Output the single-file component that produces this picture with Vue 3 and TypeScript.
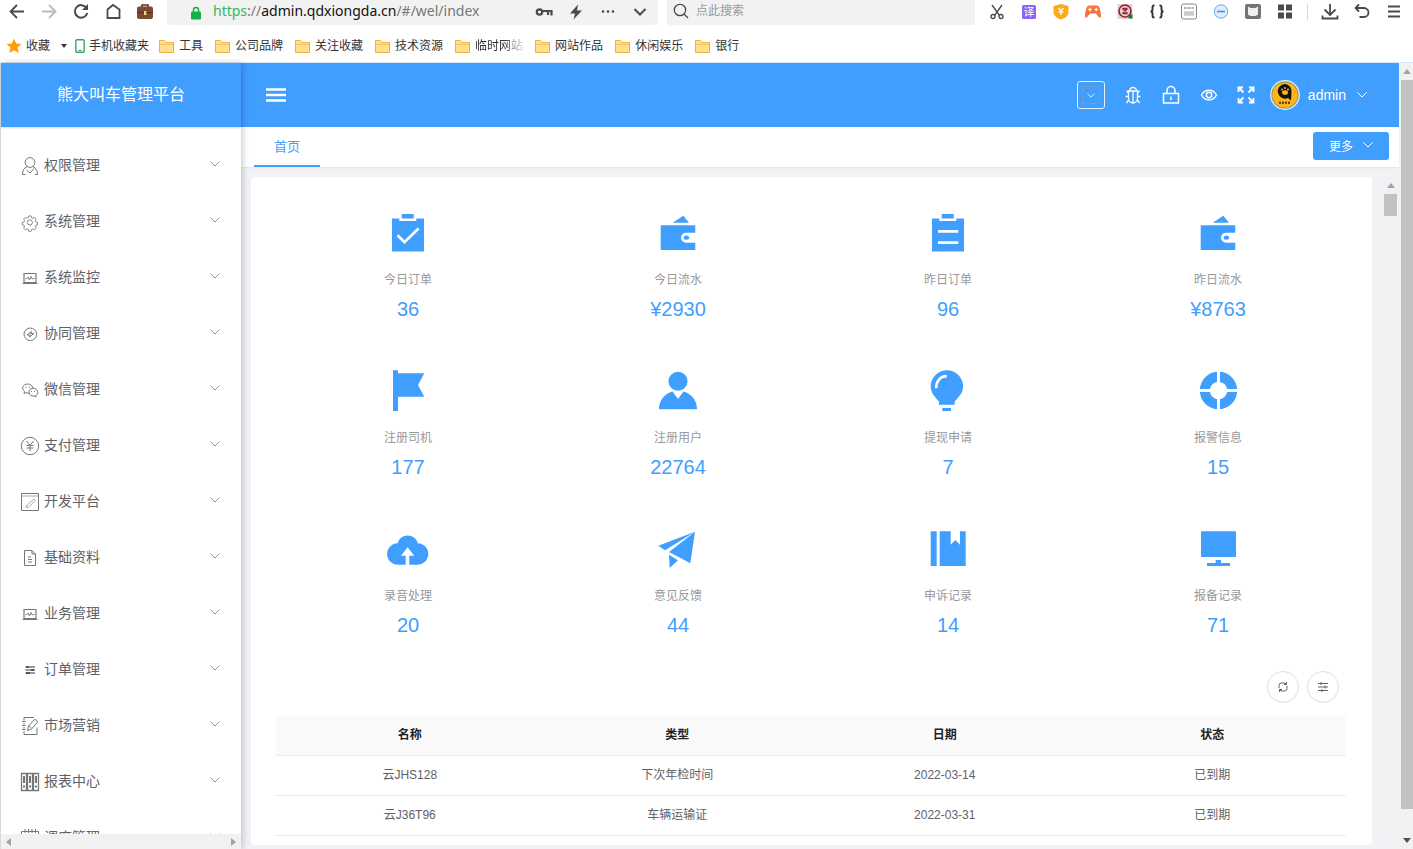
<script setup lang="ts">
interface Glyph { name: string; art: string; label: string }
interface Stat { label: string; value: string; icon: string }

const line = (d: string, color = '#4a4a4a', width = 2): string =>
  `<path d="${d}" fill="none" stroke="${color}" stroke-width="${width}"/>`

const navButtons: Glyph[] = [
  { name: 'back', label: '后退', art: line('M19 11.500H5.500M12 5l-6.500 6.500L12 18', '#4a4a4a', 1.8) },
  { name: 'forward', label: '前进', art: line('M5 11.500h13.500M12 5l6.500 6.500L12 18', '#bbb', 1.8) },
  { name: 'reload', label: '刷新', art: line('M17.500 8A6.300 6.300 0 1 0 18.300 13') + '<path d="M19 4v6h-6z" fill="#4a4a4a"/>' },
  { name: 'home', label: '主页', art: line('M6.500 18V9.500L12 5l6.500 4.500V18z', '#4a4a4a', 1.8) },
  { name: 'case', label: '工具箱', art: '<path d="M9 7V5h6v2" fill="none" stroke="#5b2e1c" stroke-width="1.600"/><rect x="4" y="6.500" width="16" height="12.500" rx="2" fill="#7d4a30"/><path d="M4 12.500h16" stroke="#5b2e1c"/><rect x="11" y="11" width="2.400" height="4" fill="#f0d090"/>' },
]

const addressTools: Glyph[] = [
  { name: 'key', label: '密码', art: '<circle cx="7.500" cy="12" r="2.700" fill="none" stroke="#4a4a4a" stroke-width="2.200"/>' + line('M10.500 11h9v4.500M16 11v4', '#4a4a4a', 2.2) },
  { name: 'bolt', label: '极速', art: '<path d="M14 4.500L6 13.500h5L9.500 19.500 18 10.500h-5z" fill="#4a4a4a"/>' },
  { name: 'dots', label: '更多操作', art: '<circle cx="7" cy="11.500" r="1.300" fill="#4a4a4a"/><circle cx="12" cy="11.500" r="1.300" fill="#4a4a4a"/><circle cx="17" cy="11.500" r="1.300" fill="#4a4a4a"/>' },
  { name: 'down', label: '展开', art: line('M6.500 9l5.500 5.500L17.500 9') },
]

const extensions: Glyph[] = [
  { name: 'cut', label: '截图', art: line('M7 5l7.500 10.500M17 5L9.500 15.500', '#4a4a4a', 1.3) + '<circle cx="8" cy="16.500" r="2" fill="none" stroke="#4a4a4a" stroke-width="1.300"/><circle cx="16" cy="16.500" r="2" fill="none" stroke="#4a4a4a" stroke-width="1.300"/>' },
  { name: 'translate', label: '翻译', art: '<rect x="5" y="5" width="14" height="14" rx="1.500" fill="#8a63f7"/><text x="12" y="16" text-anchor="middle" font-size="11" fill="#fff">译</text>' },
  { name: 'shield', label: '优惠', art: '<path d="M12 4l7.500 2v6c0 3.500-3 6-7.500 7.500C7.500 18 4.500 15.500 4.500 12V6z" fill="#ffa916"/>' + line('M9.500 8l2.500 3 2.500-3M9.500 12h5M12 11v4', '#fff', 1.4) },
  { name: 'game', label: '游戏', art: '<path d="M8 5.500h8c2.500 0 4 6.500 4 10.500 0 2.500-2 2-3 0l-2-2.500H9L7 16c-1 2-3 2.500-3 0 0-4 1.500-10.500 4-10.500z" fill="#f4743b"/>' + line('M7 9.500h4M9 7.500v4M13.500 9.500h3.500M15.200 7.700v3.600', '#fff', 1.2) },
  { name: 'seal', label: '印章', art: '<rect x="4.500" y="4" width="15" height="15" fill="#ded6d2"/><circle cx="12" cy="11" r="6" fill="none" stroke="#a01c30" stroke-width="1.600"/><path d="M9.500 8.500l5 5M14.500 8.500l-5 5M9.500 8.500h5M9.500 13.500h5" stroke="#a01c30" stroke-width="1.400" fill="none"/><rect x="15.500" y="14.500" width="4" height="4" fill="#1f7a34"/>' },
  { name: 'braces', label: '格式化', art: line('M9.500 5.500H9Q7.500 5.500 7.500 7.500v2Q7.500 11.500 5.500 11.500 7.500 11.500 7.500 13.500v2Q7.500 17.500 9 17.500h.500M14.500 5.500h.500q1.500 0 1.500 2v2q0 2 2 2-2 0-2 2v2q0 2-1.500 2h-.500', '#333', 1.9) },
  { name: 'json', label: '数据查看', art: '<rect x="4.500" y="4" width="15" height="15" rx="2" fill="#fff" stroke="#888"/><path d="M7 8h10" stroke="#999" stroke-width="1.600" stroke-dasharray="2 .600"/><path d="M7 13.500h10" stroke="#ccc" stroke-width="4.500"/>' },
  { name: 'minus', label: '屏蔽', art: '<circle cx="12" cy="11.500" r="6.700" fill="#dcedff" stroke="#6ba6ea"/><path d="M8 11.500h8" stroke="#4a8fe0" stroke-width="1.600"/>' },
  { name: 'reader', label: '阅读', art: '<rect x="4" y="4" width="16" height="15" rx="2" fill="#747474"/><path d="M7 6.500l2.500 1.500h5L17 6.500v8L14.500 16h-5L7 14.500z" fill="#efefef"/>' },
  { name: 'apps', label: '应用', art: '<path d="M5 4.500h6v6H5zM13 4.500h6v6h-6zM5 12.500h6v6H5zM13 12.500h6v6h-6z" fill="#4a4a4a"/>' },
]

const windowTools: Glyph[] = [
  { name: 'download', label: '下载', art: line('M12 4v10.500M6.500 9.500l5.500 5.500 5.500-5.500M4.500 15.500v3h15v-3', '#4a4a4a', 1.8) },
  { name: 'undo', label: '恢复', art: line('M9 4.500L5.500 8 9 11.500M6 8h8a4.500 4.500 0 0 1 0 9H9.500', '#4a4a4a', 1.8) },
  { name: 'menu', label: '菜单', art: line('M6 6.500h12M6 11.500h12M6 16.500h12', '#4a4a4a', 1.8) },
]

const bookmarks: { label: string; faded?: boolean }[] = [
  { label: '工具' }, { label: '公司品牌' }, { label: '关注收藏' }, { label: '技术资源' },
  { label: '临时网站', faded: true }, { label: '网站作品' }, { label: '休闲娱乐' }, { label: '银行' },
]

const laptop = '<path d="M4 5.500h12v9H4zM2.500 15.500h15" stroke-width="1.200"/><path d="M5.500 10.500H7l1.200-1.500 1.300 3 1.500-3.500 1.200 2.500 .800-.500h1.500" stroke-width=".900"/>'
const menu: { label: string; art: string }[] = [
  { label: '权限管理', art: '<circle cx="10" cy="6.500" r="4.900"/><path d="M7 10.700c-3 1-4.500 4-4.500 7.800h3M13 10.700c3 1 4.500 4 4.500 7.800h-2.500M6.500 14l3.500 3 4-4.500"/>' },
  { label: '系统管理', art: '<g transform="translate(1.300 1.800) scale(.86)"><circle cx="10" cy="10" r="3"/><path d="M8.600 2.500h2.800l.500 2 1.600.700 1.800-1.100 2 2-1.100 1.800.700 1.600 2 .500v2.800l-2 .500-.700 1.600 1.100 1.800-2 2-1.800-1.100-1.600.700-.500 2H8.600l-.500-2-1.600-.700-1.800 1.100-2-2 1.100-1.800-.700-1.600-2-.500V10l2-.500.700-1.600-1.100-1.800 2-2 1.800 1.100 1.600-.700z"/></g>' },
  { label: '系统监控', art: laptop },
  { label: '协同管理', art: '<circle cx="10.300" cy="10.300" r="6.300"/><path d="M7 11l4.500-3.500-.700 2h3l-4.300 3.500.700-2z"/>' },
  { label: '微信管理', art: '<path d="M9.500 13c-1.300.300-2.500.100-3.500-.400L4 13.500l.500-2C1 8.500 3 4 7.500 4c3 0 5 1.700 5.300 4"/><path d="M13 8.200c5.500.200 6 6 2.800 7.300l.200 1.500-2-1c-7 .500-6.500-7.500-1-7.800zM5.500 7.300h1M9 7.300h1M11 11.300h1M14 11.300h1"/>' },
  { label: '支付管理', art: '<circle cx="10" cy="10" r="8.700"/><path d="M6.500 5l3.500 4.500L13.500 5M6.500 9.500h7M6.500 12h7M10 9.500V15"/>' },
  { label: '开发平台', art: '<path d="M1.500 1.500h17v17h-17z"/><path d="M1.500 4h17M6 15.500l1-2.500 7-6 1.500 1.500L8.500 15z" stroke="#aaa"/>' },
  { label: '基础资料', art: '<path d="M4.500 2.500h7.500l3.500 3.500v11.500h-11zM12 2.500V6h3.500M8 9h3M8 11.500h4M8 14h4"/>' },
  { label: '业务管理', art: laptop },
  { label: '订单管理', art: '<path d="M5.500 7h9.500M5.500 10h9.500M5.500 13h9.500" stroke="#999" stroke-width="2"/><path d="M6 7h3M11 10h3M6 13h4" stroke="#555" stroke-width="2"/>' },
  { label: '市场营销', art: '<path d="M14 1.500H4v3M4 7v1.500M4 11v1.500M4 15v3.500h13v-7M2 5.500h3.500M2 9.500h3.500M2 13.500h3.500"/><path d="M7.500 14.500l1-4.500 6-6.500q3 0 3 2.700l-6 6.800zM9 9.800l2.500 2.200"/>' },
  { label: '报表中心', art: '<path d="M1.500 1.500h5v17h-5zM7.500 1.500h5v17h-5zM13.500 1.500h5v17h-5z" stroke-width="1.300"/><path d="M4 4v7M10 4v7M16 4v7" stroke-width="2"/><path d="M3 14.500h2M9 14.500h2M15 14.500h2" stroke-width="2"/>' },
  { label: '调度管理', art: '<path d="M1.500 3.500h17v14h-17zM5 1v4M8.500 1v4M12 1v4M15.500 1v4M1.500 8h17"/>' },
]

const board = '<path d="M17.700 6h12v4.500h-12zM8 10.500h7.300V13h17v-2.500H40v33H8z"/>'
const art: Record<string, string> = {
  checked: board + '<path d="M13.500 27.200l7 7L34.500 20.500" fill="none" stroke="#fff" stroke-width="2.700"/>',
  order: board + '<path d="M14 23.300h20.300M14 34.700h20.300" stroke="#fff" stroke-width="2.700"/>',
  wallet: '<path d="M18.700 14.700L29.300 7.700 35 14.700zM6.700 17.300h34.600v7.400H32a5 5 0 0 0 0 10h9.300V42H6.700z"/><ellipse cx="32.500" cy="29.700" rx="2.700" ry="2.100"/>',
  flag: '<path d="M9 4.300h5v3h26.300L34 19l6.300 11.700H14V45H9z"/>',
  user: '<circle cx="24" cy="15.300" r="9.500"/><path d="M18.500 25.500L24 33l5.500-7.500C37.500 27.500 43 34.500 43 43.300H5C5 34.500 10.500 27.500 18.500 25.500z"/>',
  bulb: '<path d="M15 38.700v-3.200C12 32 6.700 27.500 6.700 20.500a16.200 16.200 0 0 1 32.400 0c0 7-5.400 11.500-8.400 15v3.200zM18.300 42H27v3h-8.700z"/><path d="M12.200 22.300C12.200 15 16 10.500 22.700 10.200" fill="none" stroke="#fff" stroke-width="2.700"/>',
  help: '<circle cx="24.500" cy="24.500" r="13.700" fill="none" stroke="#409eff" stroke-width="10"/><path d="M24.500 4v41M4 24.500h41" stroke="#fff" stroke-width="3"/>',
  cloud: '<path d="M21.700 40.700H14a10.700 10.700 0 0 1-.400-21.400 10.400 10.400 0 0 1 20.200 0A10.700 10.700 0 0 1 33.300 40.700h-8v-9h5L23.600 23.300 17 31.700h4.700z"/>',
  plane: '<path d="M4.300 21.700L41 7.700 11 26.300zM15 28L41 7.700 36.300 39.300zM15 30.700l9 5.600L15.700 44z"/>',
  book: '<path d="M6.700 7.300h6V42h-6zM15.700 7.300h11v13.400l4.600-4.700 4.700 4.700V7.300h5.700V42h-26z"/>',
  screen: '<path d="M7 7.300h35V33H7zM21.700 36H27v3h9v3H13v-3h8.700z"/>',
}

const stats: Stat[] = [
  { label: '今日订单', value: '36', icon: 'checked' },
  { label: '今日流水', value: '¥2930', icon: 'wallet' },
  { label: '昨日订单', value: '96', icon: 'order' },
  { label: '昨日流水', value: '¥8763', icon: 'wallet' },
  { label: '注册司机', value: '177', icon: 'flag' },
  { label: '注册用户', value: '22764', icon: 'user' },
  { label: '提现申请', value: '7', icon: 'bulb' },
  { label: '报警信息', value: '15', icon: 'help' },
  { label: '录音处理', value: '20', icon: 'cloud' },
  { label: '意见反馈', value: '44', icon: 'plane' },
  { label: '申诉记录', value: '14', icon: 'book' },
  { label: '报备记录', value: '71', icon: 'screen' },
]

const headerTools: Glyph[] = [
  { name: 'bug', label: '日志', art: '<path d="M6.500 6a3.500 3.500 0 0 1 7 0M5.500 6h9v7a4.500 5 0 0 1-9 0zM10 6v12M5.500 8.500L3.500 5.500M14.500 8.500l2-3M5.500 11.500h-3M14.500 11.500h3M6 14.500l-2.500 3.500M14 14.500l2.500 3.500"/>' },
  { name: 'lock', label: '锁屏', art: '<path d="M2.500 8.500h15v9.500h-15zM6 8.500V5.500a4 4 0 0 1 8 0v3M10 11.500v3.500" stroke-width="1.500"/>' },
  { name: 'eye', label: '主题', art: '<path d="M2.500 10c3.500-6.500 11.500-6.500 15 0-3.500 6.500-11.500 6.500-15 0z" stroke-width="1.500"/><circle cx="10" cy="10" r="2.700" stroke-width="1.500"/>' },
  { name: 'full', label: '全屏', art: '<path d="M7.500 7.500L3 3M2.500 7V2.500H7M12.500 7.500L17 3M13 2.500h4.500V7M7.500 12.500L3 17M2.500 13v4.500H7M12.500 12.500L17 17M13 17.500h4.500V13" stroke-width="1.800"/>' },
]

const columns = ['名称', '类型', '日期', '状态']
const rows = [
  ['云JHS128', '下次年检时间', '2022-03-14', '已到期'],
  ['云J36T96', '车辆运输证', '2022-03-31', '已到期'],
]
</script>

<template>
  <div class="window">
    <div class="browser">
      <div class="nav-row">
        <div class="icon-group">
          <button v-for="b in navButtons" :key="b.name" class="tool" :aria-label="b.label">
            <svg viewBox="0 0 24 24" v-html="b.art" />
          </button>
        </div>
        <div class="address">
          <svg class="secure" viewBox="0 0 12 14"><path d="M3.500 6V4a2.500 2.500 0 0 1 5 0v2" fill="none" stroke="#12b24b" stroke-width="1.500" /><rect x="1" y="5.500" width="10" height="8" rx="1" fill="#12b24b" /></svg>
          <div class="url"><span class="scheme">https</span>://<span class="host">admin.qdxiongda.cn</span>/#/wel/index</div>
          <div class="icon-group">
            <button v-for="b in addressTools" :key="b.name" class="tool" :aria-label="b.label">
              <svg viewBox="0 0 24 24" v-html="b.art" />
            </button>
          </div>
        </div>
        <label class="search">
          <svg viewBox="0 0 16 16"><circle cx="7" cy="7" r="5.700" fill="none" stroke="#4a4a4a" stroke-width="1.300" /><path d="M11 11l4 4" stroke="#4a4a4a" stroke-width="1.300" /></svg>
          <input type="text" placeholder="点此搜索" aria-label="搜索">
        </label>
        <div class="icon-group">
          <button v-for="b in extensions" :key="b.name" class="tool" :aria-label="b.label">
            <svg viewBox="0 0 24 24" v-html="b.art" />
          </button>
        </div>
        <span class="divider" />
        <div class="icon-group">
          <button v-for="b in windowTools" :key="b.name" class="tool" :aria-label="b.label">
            <svg viewBox="0 0 24 24" v-html="b.art" />
          </button>
        </div>
      </div>
      <nav class="bookmarks">
        <a href="#" class="favorite">
          <svg class="star" viewBox="0 0 16 16"><path d="M8 .500l2.200 5 5.300.500-4 3.600 1.200 5.400L8 12.200 3.300 15l1.200-5.400-4-3.600 5.300-.500z" fill="#ff9c0a" /></svg>
          <span>收藏</span>
          <svg class="caret" viewBox="0 0 6 4"><path d="M0 0h6L3 4z" fill="#333" /></svg>
        </a>
        <a href="#" class="phone">
          <svg viewBox="0 0 10 14"><rect x=".800" y=".800" width="8.400" height="12.400" rx="1" fill="#fff" stroke="#3aa564" stroke-width="1.400" /><path d="M3.500 11.500h3" stroke="#3aa564" /></svg>
          <span>手机收藏夹</span>
        </a>
        <a v-for="b in bookmarks" :key="b.label" href="#" class="folder" :class="{ faded: b.faded }">
          <svg viewBox="0 0 15 13"><path d="M.500 12.500V.500h5l1.500 2h7.500v10z" fill="#ffe093" stroke="#eeb040" /><path d="M1 4.500h13" stroke="#f3c463" /></svg>
          <span>{{ b.label }}</span>
        </a>
      </nav>
    </div>

    <div class="page">
      <aside class="sidebar">
        <div class="brand">熊大叫车管理平台</div>
        <nav class="menu">
          <a v-for="m in menu" :key="m.label" href="#" class="menu-item">
            <svg class="menu-icon" viewBox="0 0 20 20" v-html="m.art" />
            <span>{{ m.label }}</span>
            <svg class="chevron" viewBox="0 0 10 6"><path d="M.500.500L5 5 9.500.500" /></svg>
          </a>
        </nav>
        <div class="hscroll">
          <svg viewBox="0 0 5 8"><path d="M5 0v8L0 4z" /></svg>
          <svg viewBox="0 0 5 8"><path d="M0 0v8l5-4z" /></svg>
        </div>
      </aside>

      <div class="main">
        <header class="topbar">
          <button class="burger" aria-label="折叠菜单">
            <svg viewBox="0 0 20 14"><path d="M0 1.500h20M0 7h20M0 12.500h20" stroke="#fff" stroke-width="2.400" /></svg>
          </button>
          <div class="top-tools">
            <button class="picker" aria-label="切换">
              <span><svg class="chevron" viewBox="0 0 10 6"><path d="M.500.500L5 5 9.500.500" /></svg></span>
            </button>
            <button v-for="t in headerTools" :key="t.name" class="top-tool" :class="t.name" :aria-label="t.label">
              <svg viewBox="0 0 20 20" v-html="t.art" />
            </button>
            <button class="account">
              <svg class="avatar" viewBox="0 0 30 30"><circle cx="15" cy="15" r="14.300" fill="#8f9a78" stroke="#e8f1fb" stroke-width="1.200" /><circle cx="15" cy="15" r="12.600" fill="#fdb515" /><path d="M15 4a7.300 7.300 0 1 0 3 14l3 2.500.500-9A7 7 0 0 0 15 4z" fill="#16130c" /><ellipse cx="15" cy="12.500" rx="3" ry="2.300" fill="#fdb515" /><circle cx="12" cy="9.500" r="1" fill="#fdb515" /><circle cx="15" cy="8" r="1" fill="#fdb515" /><circle cx="18" cy="9.500" r="1" fill="#fdb515" /><path d="M9 22.800h12" stroke="#4b3510" stroke-width="2" stroke-dasharray="2 1" /></svg>
              <span>admin</span>
              <svg class="chevron" viewBox="0 0 10 6"><path d="M.500.500L5 5 9.500.500" /></svg>
            </button>
          </div>
        </header>
        <div class="tabs">
          <a href="#" class="tab">首页</a>
          <button class="more"><span>更多</span><svg class="chevron" viewBox="0 0 10 6"><path d="M.500.500L5 5 9.500.500" /></svg></button>
        </div>
        <div class="content">
          <main class="card">
            <section class="stats">
              <a v-for="s in stats" :key="s.label" href="#" class="stat">
                <svg viewBox="0 0 48 48" v-html="art[s.icon]" />
                <span class="stat-label">{{ s.label }}</span>
                <span class="stat-value">{{ s.value }}</span>
              </a>
            </section>
            <div class="table-tools">
              <button class="round" aria-label="刷新表格">
                <svg viewBox="0 0 12 12"><path d="M2 7V4.500Q2 2 4.500 2H8M10 5v2.500Q10 10 7.500 10H4M9.500 1v2.500H7M2.500 11V8.500H5M8 2l1.500 1.500M4 10L2.500 8.500" /></svg>
              </button>
              <button class="round" aria-label="列设置">
                <svg viewBox="0 0 12 12"><path d="M1 2.500h10M1 6h10M1 9.500h10M4 1v3M8 4.500v3M5 8v3" /></svg>
              </button>
            </div>
            <table>
              <thead><tr><th v-for="c in columns" :key="c" scope="col">{{ c }}</th></tr></thead>
              <tbody>
                <tr v-for="r in rows" :key="r[0]"><td v-for="c in r" :key="c">{{ c }}</td></tr>
              </tbody>
            </table>
          </main>
          <div class="vscroll inner">
            <span class="arrow"><svg viewBox="0 0 8 5"><path d="M0 5h8L4 0z" /></svg></span>
            <span class="thumb" />
          </div>
        </div>
      </div>

      <div class="vscroll outer">
        <span class="arrow"><svg viewBox="0 0 8 5"><path d="M0 5h8L4 0z" /></svg></span>
        <span class="track"><span class="thumb" /></span>
        <span class="arrow dark"><svg viewBox="0 0 8 5"><path d="M0 0h8L4 5z" /></svg></span>
      </div>
    </div>
  </div>
</template>

<style>
body { margin: 0; }
</style>

<style scoped>
* { box-sizing: border-box; }
button { border: 0; padding: 0; background: none; font: inherit; color: inherit; cursor: pointer; }
a { color: inherit; text-decoration: none; }
svg { display: block; flex: none; }
.window {
  display: flex; flex-direction: column; height: 100vh; overflow: hidden; background: #fff;
  font-family: "Liberation Sans", "Noto Sans CJK SC", sans-serif; font-size: 12px; color: #606266;
}
.browser { flex: none; height: 63px; border-bottom: 1px solid #d9e9fb; }
.nav-row { display: flex; height: 25px; padding: 0 7px 0 5px; }
.icon-group { display: flex; gap: 8px; padding-bottom: 2px; align-items: center; }
.tool, .tool svg { width: 24px; height: 24px; }
.address { flex: 462 1 0; min-width: 0; display: flex; align-items: center; margin-left: 10px; padding: 0 6px 0 23px; background: #f2f2f2; border-radius: 0 0 3px 3px; }
.secure { width: 12px; height: 14px; }
.url { flex: 1; min-width: 0; margin-left: 11px; padding-bottom: 3px; font-family: "Noto Sans", sans-serif; font-size: 14px; line-height: 22px; color: #777; white-space: nowrap; }
.scheme { color: #36b565; }
.host { color: #111; }
.search { flex: 296 1 0; min-width: 0; display: flex; align-items: center; margin: 0 10px 0 9px; padding: 0 6px 3px; background: #f2f2f2; border-radius: 0 0 3px 3px; }
.search svg { width: 16px; height: 16px; }
.search input { flex: 1; min-width: 0; margin-left: 7px; padding: 0; border: 0; outline: 0; background: none; font: inherit; }
.search input::placeholder { color: #999; }
.divider { width: 1px; height: 16px; margin: 4px 10px 0; background: #d8d8d8; }
.bookmarks { display: flex; align-items: center; height: 38px; padding: 4px 6px 0; color: #333; }
.bookmarks a { display: flex; align-items: center; line-height: 18px; white-space: nowrap; }
.star { width: 16px; height: 16px; margin-right: 4px; }
.caret { width: 6px; height: 4px; margin: 0 8px 0 11px; }
.phone { gap: 4px; margin-right: 10px; }
.phone svg { width: 10px; height: 14px; }
.folder { gap: 5px; margin-right: 12px; }
.folder svg { width: 15px; height: 13px; }
.faded span { background: linear-gradient(90deg, #333 60%, #ddd); background-clip: text; color: transparent; }

.page { flex: 1; min-height: 0; display: flex; border-left: 1px solid #dfe2e6; }
.sidebar { position: relative; z-index: 1; flex: none; display: flex; flex-direction: column; width: 240px; background: #fff; box-shadow: 2px 0 6px rgba(0, 21, 41, .2); }
.brand { flex: none; height: 64px; line-height: 64px; text-align: center; font-size: 16px; color: #fff; background: #409eff; box-shadow: 0 1px 2px rgba(0, 0, 0, .15); }
.menu { flex: 1; min-height: 0; overflow: hidden; padding-top: 11px; }
.menu-item { display: flex; align-items: center; height: 56px; padding: 0 21px 0 19px; font-size: 14px; line-height: 20px; }
.menu-item span { padding-bottom: 2px; }
.menu-icon { width: 20px; height: 20px; margin-right: 4px; fill: none; stroke: #777; stroke-width: 1; }
.chevron { width: 10px; height: 6px; fill: none; stroke: currentColor; }
.menu-item .chevron { margin: 0 0 4px auto; color: #909399; }
.hscroll { flex: none; display: flex; align-items: center; justify-content: space-between; height: 15px; padding: 0 5px; background: #f1f1f1; }
.hscroll svg { width: 5px; height: 8px; fill: #a3a3a3; }

.main { flex: 1; min-width: 0; display: flex; flex-direction: column; background: #f0f2f5; }
.topbar { flex: none; display: flex; align-items: center; justify-content: space-between; height: 64px; padding: 0 32px 0 25px; background: #409eff; color: #fff; }
.burger svg { width: 20px; height: 14px; }
.top-tools { display: flex; align-items: center; }
.picker { display: flex; align-items: center; justify-content: center; width: 28px; height: 28px; margin-right: 18px; border: 1px solid #e6f1fc; border-radius: 3px; }
.picker span { display: flex; align-items: center; justify-content: center; width: 18px; height: 18px; border: 1px solid #6f9fd0; }
.picker .chevron { width: 8px; height: 5px; }
.top-tool { margin-right: 18px; }
.top-tool svg { width: 20px; height: 20px; fill: none; stroke: #fff; stroke-width: 1.3; }
.top-tool.eye { margin-right: 17px; }
.top-tool.full { margin-right: 14px; }
.account { display: flex; align-items: center; font-size: 14px; }
.avatar { width: 30px; height: 30px; margin-right: 8px; }
.account .chevron { margin-left: 11px; }
.tabs { flex: none; display: flex; justify-content: space-between; height: 40px; padding: 0 10px 0 13px; background: #fff; box-shadow: 0 1px 2px rgba(0, 0, 0, .06); }
.tab { height: 40px; padding: 0 20px; border-bottom: 2px solid #409eff; font-size: 13px; line-height: 40px; color: #409eff; }
.more { display: flex; align-items: center; justify-content: center; gap: 10px; width: 76px; height: 28px; margin-top: 5px; padding-bottom: 2px; border-radius: 3px; background: #409eff; color: #fff; }
.content { flex: 1; min-height: 0; display: flex; padding: 10px 2px 4px 10px; }
.card { flex: 1; min-width: 0; overflow: hidden; margin-right: 12px; padding: 31px 0 0; border-radius: 4px; background: #fff; }
.stats { display: grid; grid-template-columns: repeat(4, 1fr); row-gap: 45px; padding: 0 19px 0 22px; }
.stat { display: flex; flex-direction: column; align-items: center; }
.stat svg { width: 48px; height: 48px; fill: #409eff; }
.stat-label { margin-top: 16px; line-height: 16px; color: #999; }
.stat-value { margin-top: 9px; font-size: 20px; line-height: 24px; color: #409eff; }
.table-tools { display: flex; justify-content: flex-end; gap: 8px; margin: 34px 33px 13px 0; }
.round { display: flex; align-items: center; justify-content: center; width: 32px; height: 32px; border: 1px solid #dcdfe6; border-radius: 50%; }
.round svg { width: 12px; height: 12px; fill: none; stroke: #606266; stroke-width: 1; }
table { width: calc(100% - 51px); margin-left: 25px; border-spacing: 0; table-layout: fixed; }
th, td { height: 40px; padding: 0 0 1px; border-bottom: 1px solid #e8eaef; line-height: 18px; text-align: center; }
th { background: #fafafa; color: #222; font-weight: 700; }

.vscroll { flex: none; display: flex; flex-direction: column; background: #f1f1f1; }
.vscroll svg { width: 8px; height: 5px; fill: #a3a3a3; }
.vscroll .dark svg { fill: #505050; }
.arrow { flex: none; display: flex; align-items: center; justify-content: center; height: 17px; }
.thumb { display: block; background: #c1c1c1; }
.inner { width: 13px; }
.inner .thumb { height: 22px; }
.outer { width: 14px; padding-left: 2px; }
.track { flex: 1; }
.outer .thumb { height: 97%; }
</style>
